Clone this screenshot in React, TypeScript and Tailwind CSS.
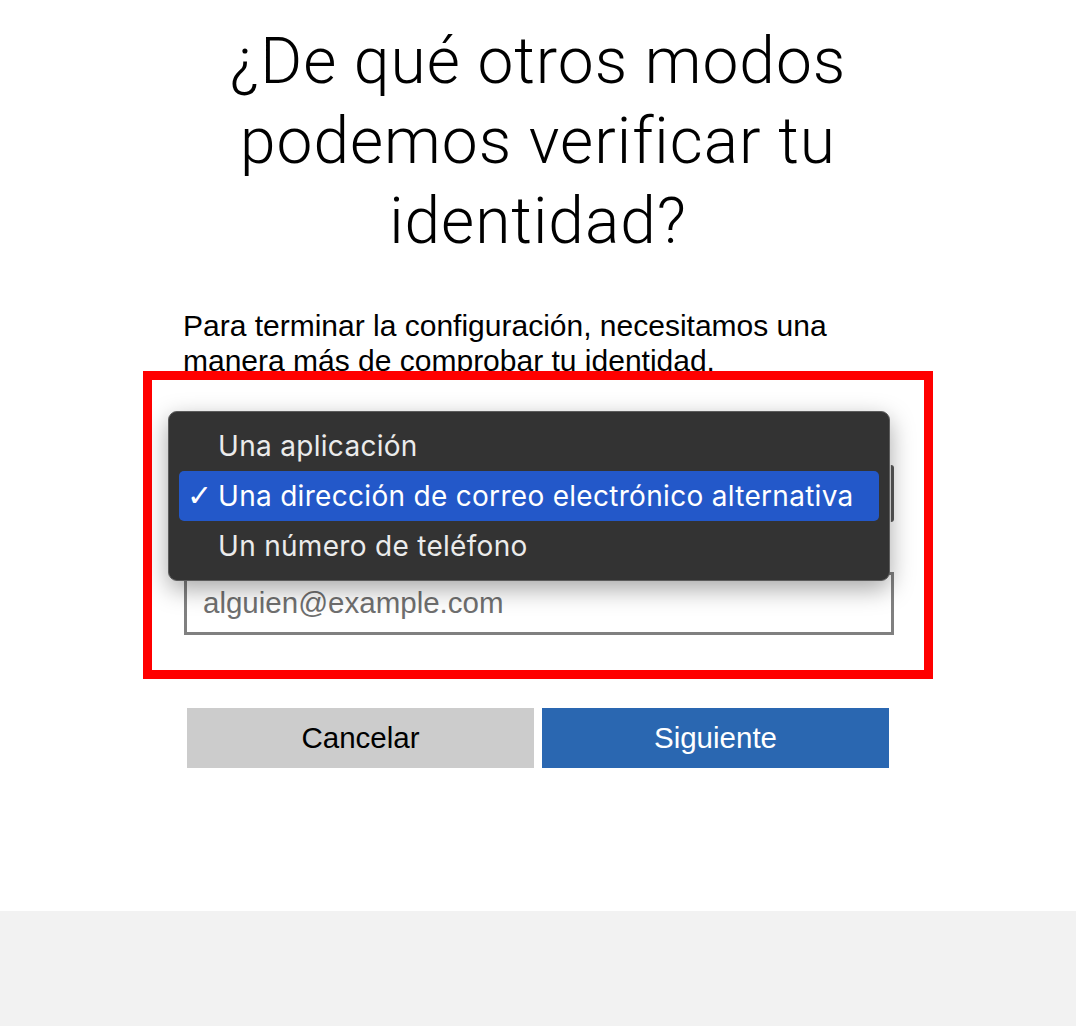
export default function App() {
  const options = [
    { label: "Una aplicación", selected: false },
    { label: "Una dirección de correo electrónico alternativa", selected: true },
    { label: "Un número de teléfono", selected: false },
  ];

  return (
    <div className="min-h-[1026px] flex flex-col bg-white" style={{ fontFamily: "'Liberation Sans', Arial, sans-serif" }}>
      <main className="relative h-[911px] bg-white">
        <h1 className="pt-[22px] text-center text-[64px] leading-[80px] font-light tracking-[1px] text-black" style={{ fontFamily: "Roboto, 'Liberation Sans', sans-serif" }}>
          ¿De qué otros modos
          <br />
          podemos verificar tu
          <br />
          identidad?
        </h1>

        <div className="mx-auto mt-[46px] w-[710px]">
          <p className="text-[30px] leading-[35px] text-black">
            Para terminar la configuración, necesitamos una manera más de comprobar tu identidad.
          </p>

          <div className="h-[200px]" />

          <div className="mt-[130px] flex gap-2 px-1">
            <button className="h-[60px] flex-1 bg-[#cccccc] text-[29.5px] text-black">Cancelar</button>
            <button className="h-[60px] flex-1 bg-[#2a67b1] text-[29.5px] text-white">Siguiente</button>
          </div>
        </div>

        {/* highlighted region */}
        <div className="absolute left-[143px] top-[371px] h-[308px] w-[790px] border-[9px] border-[#ff0000] bg-white">
          <div className="relative flex flex-col gap-[50px] pl-[32px] pt-[85px]">
            <div className="h-[57px] w-[710px] rounded-[3px] border-r-[3px] border-[#5a5a5a] bg-[#e8e8e8]" />
            <div className="flex h-[63px] w-[710px] items-center border-[3px] border-[#808080] px-[16px] text-[29.5px] text-[#6f6f6f]">
              alguien@example.com
            </div>

            <div className="absolute left-[16px] top-[31px] flex h-[170px] w-[722px] flex-col justify-center rounded-[9px] border border-[#5c5c5c] bg-[#333333] px-[10px] shadow-[0_8px_24px_rgba(0,0,0,0.35)]" style={{ fontFamily: "Inter, 'Noto Sans', sans-serif" }}>
              {options.map((o) => (
                <div
                  key={o.label}
                  className={
                    o.selected
                      ? "flex h-[50px] items-center rounded-[5px] bg-[#2358c9] text-[28px] tracking-[0.3px] text-white"
                      : "flex h-[50px] items-center rounded-[5px] text-[28px] tracking-[0.3px] text-[#ebebeb]"
                  }
                >
                  <span className="w-[39px] pl-[8px] text-[30px] leading-none" style={{ fontFamily: "'DejaVu Sans', sans-serif" }}>
                    {o.selected ? "✓" : ""}
                  </span>
                  <span>{o.label}</span>
                </div>
              ))}
            </div>
          </div>
        </div>
      </main>
      <footer className="h-[115px] bg-[#f2f2f2]" />
    </div>
  );
}
